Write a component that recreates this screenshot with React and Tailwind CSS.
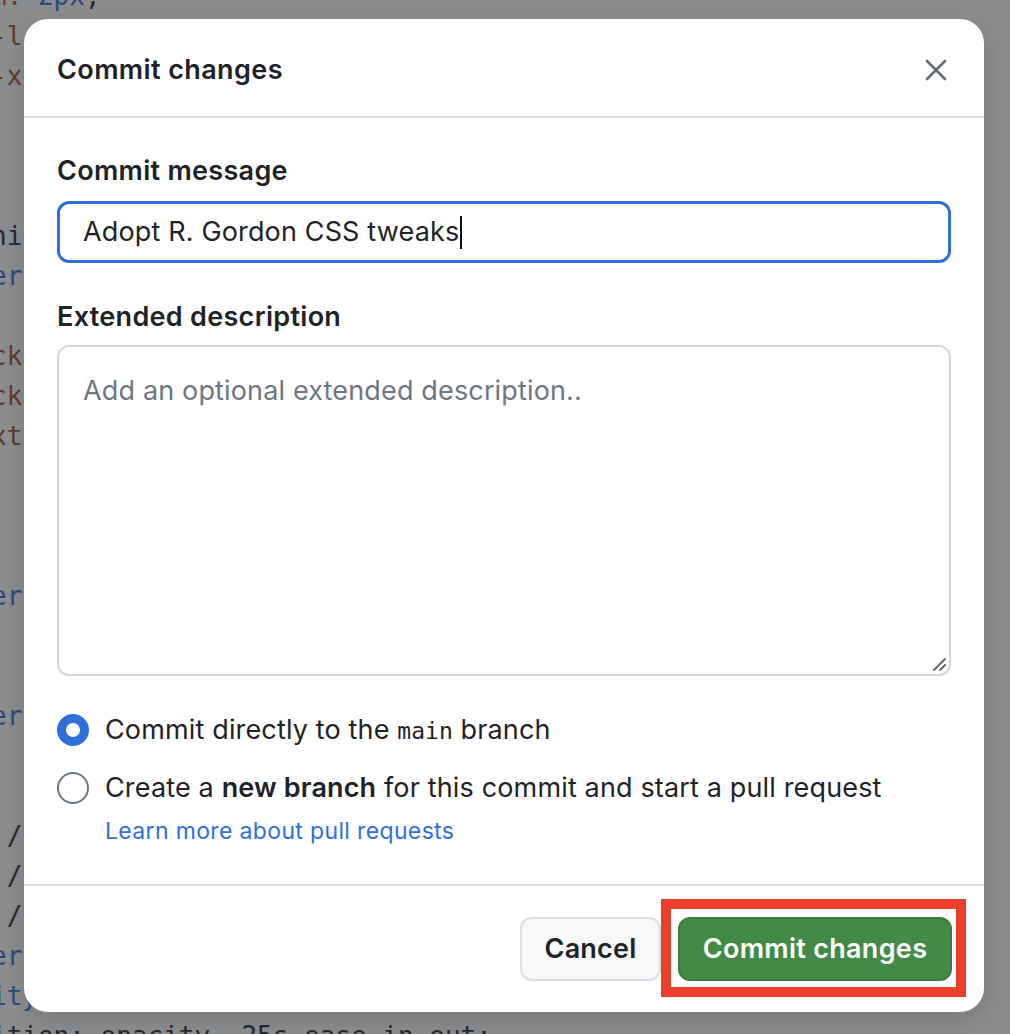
import React from 'react';

const BROWN = 'text-[#5e3c2a]';
const BLUE = 'text-[#2b4a7e]';
const DARK = 'text-[#27292c]';

// dimmed editor lines behind the dialog (only the left edge shows)
const codeLines = [
  [[BROWN, 'm: '], [BLUE, '2px'], [DARK, ';']],
  [[BROWN, '-l']],
  [[BROWN, '-x']],
  [],
  [],
  [],
  [[DARK, 'hi']],
  [[BLUE, 'er']],
  [],
  [[BROWN, 'ck']],
  [[BROWN, 'ck']],
  [[BROWN, 'xt-']],
  [],
  [],
  [],
  [[BLUE, 'er']],
  [],
  [],
  [[BLUE, 'er']],
  [],
  [],
  [[DARK, ' /']],
  [[DARK, ' /']],
  [[DARK, ' /']],
  [[BLUE, 'er']],
  [[BLUE, 'ity']],
  [[DARK, 'ition: opacity .25s ease-in-out;']],
];

const CloseIcon = () => (
  <svg width="22" height="22" viewBox="0 0 22 22" fill="none">
    <path d="M2 2 L20 20 M20 2 L2 20" stroke="#656d76" strokeWidth="2.6" strokeLinecap="round" />
  </svg>
);

const App = () => {
  return (
    <div className="relative w-[1010px] h-[1034px] overflow-hidden bg-[#8c8d8f] font-['Inter',sans-serif]">
      {/* editor in background */}
      <div className="-mt-[24px] font-['DejaVu_Sans_Mono',monospace] text-[26px]">
        {codeLines.map((segs, i) => (
          <div key={i} className="h-[40px] leading-[40px] whitespace-pre -ml-[9px]">
            {segs.map(([cls, txt], j) => (
              <span key={j} className={cls}>{txt}</span>
            ))}
          </div>
        ))}
      </div>

      {/* dialog */}
      <div className="absolute left-[24px] top-[19px] w-[960px] h-[993px] bg-white rounded-[24px] flex flex-col text-[#1f2328] shadow-[0_8px_24px_rgba(0,0,0,0.15)]">
        <div className="h-[99px] flex items-center justify-between pl-[33px] pr-[37px] pt-[5px] border-b-2 border-[#d8dee4]">
          <h2 className="text-[27px] font-semibold tracking-[0.4px]">Commit changes</h2>
          <CloseIcon />
        </div>

        <div className="flex-1 px-[33px] pt-[37px] text-[27px] tracking-[0.15px]">
          <label className="block leading-[32px] font-semibold tracking-[0.3px]">Commit message</label>
          <div className="mt-[14px] h-[62px] rounded-[12px] border-[3px] border-[#2f6fd9] flex items-center pl-[23px]">
            <span>Adopt R. Gordon CSS tweaks</span>
            <span className="w-[2px] h-[33px] bg-[#111] ml-[1px]" />
          </div>

          <label className="block mt-[38px] leading-[32px] font-semibold tracking-[0.3px]">Extended description</label>
          <div className="relative mt-[12px] h-[331px] rounded-[12px] border-2 border-[#d0d7de] pl-[24px] pt-[28px] leading-[32px] text-[#6e7781]">
            Add an optional extended description..
            <svg className="absolute right-[3px] bottom-[3px]" width="14" height="14" viewBox="0 0 14 14">
              <path d="M2 13 L13 2 M8 13 L13 8" stroke="#5f6368" strokeWidth="1.8" strokeLinecap="round" />
            </svg>
          </div>

          <div className="mt-[34px] flex items-center h-[40px] gap-[16px]">
            <span className="w-[32px] h-[32px] rounded-full border-[9px] border-[#2f6fd9] bg-white" />
            <span>
              Commit directly to the <span className="font-['DejaVu_Sans_Mono',monospace] text-[23px] tracking-normal">main</span> branch
            </span>
          </div>
          <div className="mt-[18px] flex items-center h-[40px] gap-[16px]">
            <span className="w-[32px] h-[32px] rounded-full border-2 border-[#6e7781] bg-white" />
            <span>
              Create a <b className="font-semibold">new branch</b> for this commit and start a pull request
            </span>
          </div>
          <a className="block mt-[8px] ml-[48px] text-[23px] tracking-[0.35px] leading-[30px] text-[#2f6fd9]">Learn more about pull requests</a>
        </div>

        <div className="h-[128px] border-t-2 border-[#d8dee4] flex items-center justify-end gap-[17px] pr-[32px]">
          <button className="w-[141px] h-[64px] rounded-[12px] bg-[#f6f8fa] border-2 border-[#d8dee4] text-[27px] tracking-[0.2px] font-semibold text-[#1f2328]">
            Cancel
          </button>
          <div className="relative">
            <button className="w-[274px] h-[64px] rounded-[12px] bg-[#438a46] border-2 border-[#3b7c3f] text-[27px] tracking-[0.3px] font-semibold text-white">
              Commit changes
            </button>
            <div className="absolute -left-[17px] -right-[14px] -top-[18px] -bottom-[16px] border-[10px] border-[#e9402a]" />
          </div>
        </div>
      </div>
    </div>
  );
};

export default App;
